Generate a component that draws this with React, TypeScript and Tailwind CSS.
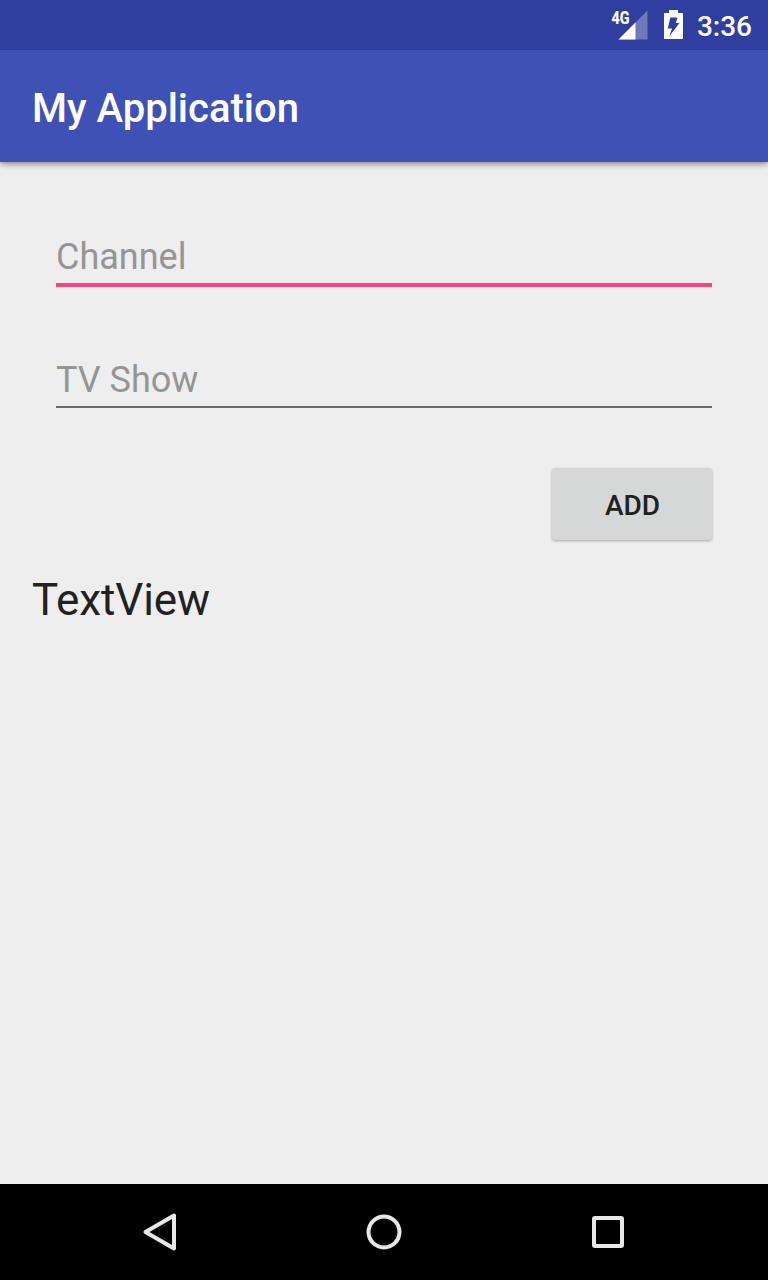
export default function App() {
  return (
    <div className="flex h-[1280px] w-[768px] flex-col overflow-hidden bg-[#eeeeee] font-[Roboto,sans-serif]">
      <div className="z-20 flex h-[50px] shrink-0 items-center justify-end bg-[#303f9f] pr-4 text-white">
        <svg width="38" height="50" viewBox="611 0 38 50" className="mr-[15px]">
          <path d="M647.500 10.500V39.500H618.500z" fill="#fff" fillOpacity=".3" />
          <path d="M635.500 22.500V39.500H618.500z" fill="#fff" />
          <text x="611.500" y="23.800" fontSize="17.500" fontWeight="700" textLength="18" lengthAdjust="spacingAndGlyphs" fill="#fff" stroke="#fff" strokeWidth=".2">4G</text>
        </svg>
        <svg width="20" height="50" viewBox="664 0 20 50" className="mr-[13px]">
          <path fillRule="evenodd" d="M683 13H678V10H669V13H664.500L664 13.500V38.500L664.500 39H682.500L683 38.500zM670.300 17.500H677.500L675.800 23H679.500L669.500 36L672 28.500H667.800z" fill="#fff" />
        </svg>
        <span className="mt-[3px] text-[28px] font-medium leading-8">3:36</span>
      </div>
      <header className="z-10 flex h-28 shrink-0 items-center bg-[#3f51b5] pl-8 pt-[6px] shadow-[0_2px_6px_rgba(0,0,0,0.45)]">
        <h1 className="text-[40px] font-medium leading-[48px] text-white">My Application</h1>
      </header>
      <main className="flex flex-1 flex-col">
        <div className="mx-14 mt-[64px] h-[61px] border-b-4 border-[#ff4081] pt-[9px] text-4xl leading-[44px] text-[#959595]">Channel</div>
        <div className="mx-14 mt-[62px] h-[59px] border-b-2 border-[#6b6b6b] pt-[9px] text-4xl leading-[44px] text-[#959595]">TV Show</div>
        <button className="mr-14 mt-[60px] h-[72px] w-40 self-end rounded-[4px] bg-[#d6d7d7] pl-px pt-1 text-[28px] font-medium text-[#212121] shadow-[0_1px_3px_rgba(0,0,0,0.3)]">ADD</button>
        <p className="ml-8 mt-[34px] text-[44px] leading-[52px] tracking-[-0.1px] text-[#212121]">TextView</p>
      </main>
      <nav className="flex h-24 shrink-0 items-center justify-between bg-black px-[130px]">
        <svg width="60" height="60" viewBox="0 0 60 60" fill="none" stroke="#e8e8e8" strokeWidth="4" strokeLinejoin="round"><path d="M44 15.500V48.500L15.500 32z" transform="translate(0 -2)" /></svg>
        <svg width="60" height="60" viewBox="0 0 60 60" fill="none" stroke="#e8e8e8" strokeWidth="4"><circle cx="30" cy="30" r="15.500" /></svg>
        <svg width="60" height="60" viewBox="0 0 60 60" fill="none" stroke="#e8e8e8" strokeWidth="4"><rect x="16" y="16" width="28" height="28" rx="1" /></svg>
      </nav>
    </div>
  );
}
